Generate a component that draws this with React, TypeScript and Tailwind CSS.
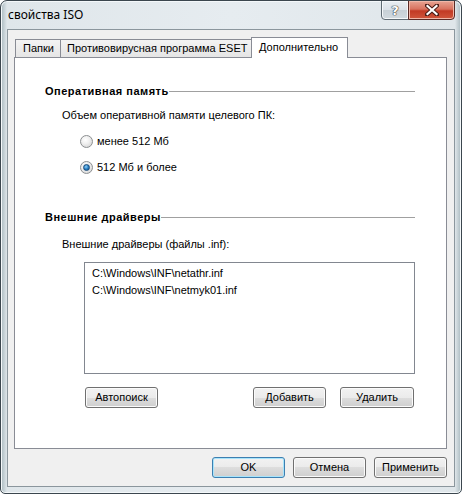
import React from "react";

const dlg = "font-['Liberation_Sans',Arial,sans-serif] text-[11px] text-black";

function Btn({ children, w, def }: { children: React.ReactNode; w: string; def?: boolean }) {
  return (
    <div
      className={`${w} h-[21px] rounded-[3px] border flex items-center justify-center ${
        def
          ? "border-[#3c7fb1] shadow-[inset_0_0_0_1px_#a8e4fb] bg-[linear-gradient(180deg,#f2f2f2_0%,#ebebeb_50%,#dddddd_50%,#cfcfcf_100%)]"
          : "border-[#707070] shadow-[inset_0_0_0_1px_#fbfbfb] bg-[linear-gradient(180deg,#f2f2f2_0%,#ebebeb_50%,#dddddd_50%,#cfcfcf_100%)]"
      }`}
    >
      <span className="leading-none">{children}</span>
    </div>
  );
}

function Radio({ checked }: { checked?: boolean }) {
  return (
    <div className="w-[13px] h-[13px] rounded-full border border-[#8c8f91] bg-[radial-gradient(circle_at_40%_35%,#ffffff_0%,#f0f0f0_40%,#cdcdcd_100%)] flex items-center justify-center shrink-0">
      {checked && (
        <div className="w-[7px] h-[7px] rounded-full border border-[#1a4b7a] bg-[radial-gradient(circle_at_40%_35%,#8fd0f8_0%,#2b81c4_50%,#0e4f86_100%)]" />
      )}
    </div>
  );
}

function Heading({ text }: { text: string }) {
  return (
    <div className="h-[14px] flex items-center pl-[30px] pr-[31px]">
      <span className="font-bold leading-none whitespace-nowrap tracking-[0.5px]">{text}</span>
      <div className="flex-1 h-px bg-[#a0a0a0]" />
    </div>
  );
}

export default function App() {
  return (
    <div className="w-[462px] h-[494px] bg-white">
      <div className="w-[462px] h-[494px] rounded-t-[7px] rounded-b-[5px] border border-[#3b464e] bg-[linear-gradient(90deg,#a9b9bf_0px,#dfe6ea_6px,#e6ecf0_50%,#dfe6ea_calc(100%-6px),#a9b9bf_100%)] shadow-[inset_0_0_0_1px_#f4f8fa] flex flex-col overflow-hidden">
        {/* Title bar */}
        <div className="h-[28px] flex items-start shrink-0">
          <div className="pl-[7px] pt-[6px] font-['Noto_Sans',sans-serif] text-[12px] leading-[16px] text-black">
            свойства ISO
          </div>
          <div className="flex-1" />
          <div className="flex mr-[6px] -mt-px">
            <div className="w-[28px] h-[20px] border border-[#5f6b73] rounded-bl-[4px] bg-[linear-gradient(180deg,#e9eef2_0%,#dbe2e8_50%,#c7d0d6_50%,#d2dadf_100%)] shadow-[inset_0_0_0_1px_#f5f8fa] flex items-center justify-center">
              <span className="font-['DejaVu_Sans',sans-serif] font-bold text-[13px] leading-none text-white [text-shadow:0_0_1px_#333,0_0_1px_#333,0_0_1px_#333]">?</span>
            </div>
            <div className="w-[47px] h-[20px] -ml-px border border-[#5a2a25] rounded-br-[4px] bg-[linear-gradient(180deg,#e8a493_0%,#d9725f_45%,#c23a24_55%,#d0563c_100%)] shadow-[inset_0_0_0_1px_#f0b7a8] flex items-center justify-center">
              <svg width="14" height="12" viewBox="0 0 14 12">
                <path d="M2 1.5 L12 10.5 M12 1.5 L2 10.5" stroke="#4a1d17" strokeWidth="4.2" strokeLinecap="square" />
                <path d="M2.5 2 L11.5 10 M11.5 2 L2.5 10" stroke="#ffffff" strokeWidth="2.2" strokeLinecap="square" />
              </svg>
            </div>
          </div>
        </div>

        {/* Client area */}
        <div className={`mx-[6px] mb-[6px] flex-1 border border-[#8b969d] bg-[#f0f0f0] flex flex-col ${dlg}`}>
          {/* Tabs */}
          <div className="pt-[7px] pl-[6px] pr-[7px] flex flex-col">
            <div className="flex items-end h-[21px] pl-px relative z-10 -mb-px">
              <div className="w-[46px] h-[18px] border border-b-0 border-[#898c95] bg-[linear-gradient(180deg,#f3f3f3,#e5e5e5)] flex items-center pl-[7px] mb-px">
                <span className="leading-none">Папки</span>
              </div>
              <div className="w-[192px] h-[18px] -ml-px border border-b-0 border-[#898c95] bg-[linear-gradient(180deg,#f3f3f3,#e5e5e5)] flex items-center pl-[6px] mb-px">
                <span className="leading-none">Противовирусная программа ESET</span>
              </div>
              <div className="w-[97px] h-[21px] -ml-px border border-b-0 border-[#898c95] bg-white flex items-start pt-[4px] pl-[7px]">
                <span className="leading-none">Дополнительно</span>
              </div>
            </div>

            {/* Panel */}
            <div className="h-[392px] border border-[#898c95] bg-white flex flex-col pt-[26px]">
              <Heading text="Оперативная память" />
              <div className="h-[14px] mt-[10px] pl-[47px] flex items-center">
                <span className="leading-none">Объем оперативной памяти целевого ПК:</span>
              </div>
              <div className="h-[14px] mt-[12px] pl-[65px] flex items-center gap-[4px]">
                <Radio />
                <span className="leading-none">менее 512 Мб</span>
              </div>
              <div className="h-[14px] mt-[12px] pl-[65px] flex items-center gap-[4px]">
                <Radio checked />
                <span className="leading-none">512 Мб и более</span>
              </div>

              <div className="mt-[36px]">
                <Heading text="Внешние драйверы" />
              </div>
              <div className="h-[14px] mt-[13px] pl-[47px] flex items-center">
                <span className="leading-none">Внешние драйверы (файлы .inf):</span>
              </div>

              <div className="ml-[69px] mr-[31px] mt-[11px] h-[112px] border border-[#828790] bg-white pt-[2px] pl-[7px] flex flex-col">
                <div className="h-[17px] flex items-center">C:\Windows\INF\netathr.inf</div>
                <div className="h-[17px] flex items-center">C:\Windows\INF\netmyk01.inf</div>
              </div>

              <div className="mt-[13px] flex pl-[70px] pr-[32px]">
                <Btn w="w-[73px]">Автопоиск</Btn>
                <div className="flex-1" />
                <Btn w="w-[73px]">Добавить</Btn>
                <div className="w-[14px]" />
                <Btn w="w-[74px]">Удалить</Btn>
              </div>
            </div>
          </div>

          {/* Bottom buttons */}
          <div className="mt-[8px] flex justify-end pr-[7px] gap-[8px]">
            <Btn w="w-[73px]" def>
              OK
            </Btn>
            <Btn w="w-[73px]">Отмена</Btn>
            <Btn w="w-[73px]">Применить</Btn>
          </div>
        </div>
      </div>
    </div>
  );
}
